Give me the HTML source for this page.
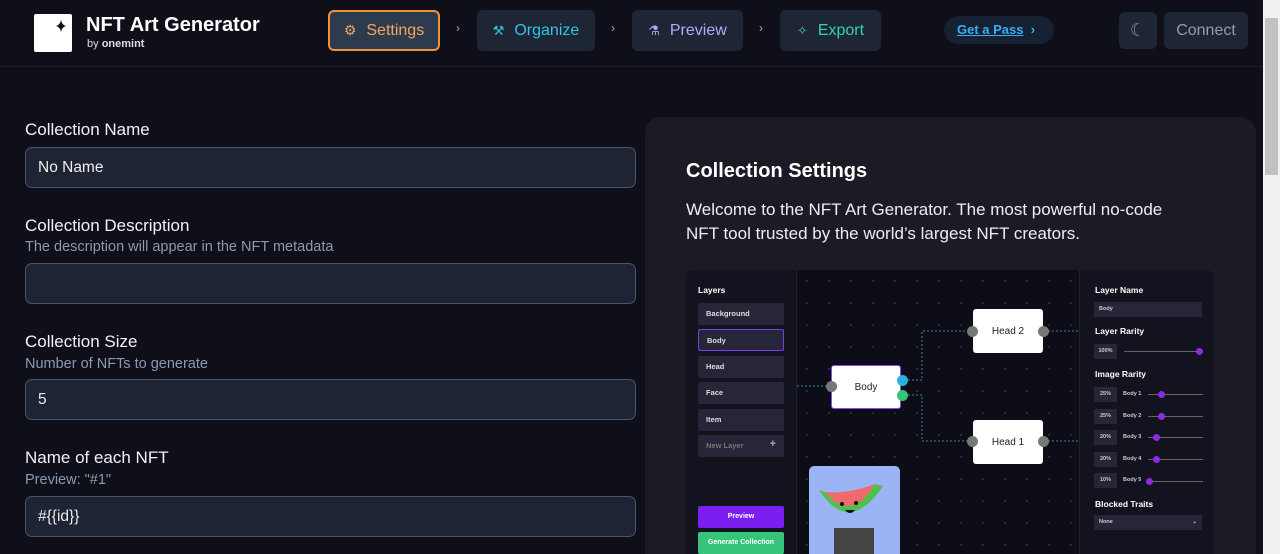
<!DOCTYPE html>
<html style="width:1280px;height:554px;overflow:hidden"><head><meta charset="utf-8"><style>
*{box-sizing:border-box;margin:0;padding:0}
body{width:1280px;height:554px;overflow:hidden;background:#0f0f1a;font-family:"Liberation Sans",sans-serif;color:#fff;position:relative}
.hdr{position:absolute;left:0;top:0;width:1263px;height:67px;border-bottom:1px solid #1c1f2e}
.logo{position:absolute;left:34px;top:14px;width:38px;height:38px;background:#fff;border-radius:2px}
.btn{position:absolute;top:10px;height:41px;border-radius:6px;background:#1e2636;font-size:16px;display:flex;align-items:center;justify-content:center;gap:10px}
.chev{position:absolute;top:21px;color:#aab;font-size:12px}
.lbl{position:absolute;left:25px;font-size:17px;color:#f2f2f2}
.sub{position:absolute;left:25px;font-size:14.5px;color:#8a9ab0}
.inp{position:absolute;left:25px;width:611px;height:41px;border:1px solid #4a5568;background:#1e2433;border-radius:7px;font-size:15.5px;padding:11px 12px;color:#eee}
.panel{position:absolute;left:645px;top:117px;width:611px;height:437px;background:#1b1b25;border-radius:16px 16px 0 0}
.img{position:absolute;left:686px;top:270px;width:528px;height:284px;background:#0d0d17;border-radius:8px 8px 0 0;overflow:hidden;font-weight:bold;background-image:radial-gradient(#2a2a3a 1px,transparent 1.3px);background-size:22px 22px}
.li{position:absolute;left:12px;width:86px;height:22px;background:#262638;border-radius:2px;font-size:7.5px;padding:6px 8px;color:#ddd}
.node{position:absolute;width:70px;height:44px;background:#fff;border-radius:3px;color:#222;font-size:10px;font-weight:normal;display:flex;align-items:center;justify-content:center}
.dot{position:absolute;width:11px;height:11px;border-radius:50%;background:#777}
.pc{position:absolute;left:408px;width:23px;height:15px;background:#262638;font-size:5.5px;color:#ccc;text-align:center;line-height:15px}
.bn{position:absolute;left:437px;font-size:5.5px;color:#ccc}
.sl{position:absolute;left:462px;width:55px;height:1px;background:#666}
.sk{position:absolute;width:7px;height:7px;border-radius:50%;background:#8a2be2}
</style></head><body>
<div class="hdr">
<div class="logo"><svg width="38" height="38"><path d="M27 6 Q28 11 32 12 Q28 13 27 18 Q26 13 22 12 Q26 11 27 6Z" fill="#111"/></svg></div>
<div style="position:absolute;left:86px;top:14px;font-size:20px;font-weight:bold">NFT Art Generator</div>
<div style="position:absolute;left:87px;top:38px;font-size:11px;color:#ddd">by <b>onemint</b></div>
<div class="btn" style="left:328px;width:112px;border:2px solid #f0913a;background:#2e3a4e;color:#f5a65b"><span style="font-size:14px">⚙</span>Settings</div>
<div class="chev" style="left:456px">›</div>
<div class="btn" style="left:477px;width:118px;color:#2ec4e6"><span style="font-size:13px">⚒</span>Organize</div>
<div class="chev" style="left:611px">›</div>
<div class="btn" style="left:632px;width:111px;color:#b6a8f5"><span style="font-size:13px">⚗</span>Preview</div>
<div class="chev" style="left:759px">›</div>
<div class="btn" style="left:780px;width:101px;color:#35d4a4"><span style="font-size:13px">✧</span>Export</div>
<div style="position:absolute;left:944px;top:16px;width:110px;height:28px;border-radius:14px;background:#162233;color:#38aef0;font-size:13px;font-weight:bold;padding:6px 13px"><u>Get a Pass</u>&nbsp;&nbsp;›</div>
<div class="btn" style="left:1119px;top:12px;width:38px;height:37px;color:#889;font-size:18px">☾</div>
<div class="btn" style="left:1164px;top:12px;width:84px;height:37px;color:#99a;font-size:16px">Connect</div>
</div>
<div style="position:absolute;left:1263px;top:0;width:17px;height:554px;background:#f1f1f1"><div style="position:absolute;left:2px;top:18px;width:13px;height:157px;background:#c1c1c1"></div></div>

<div class="lbl" style="top:120px">Collection Name</div>
<div class="inp" style="top:147px">No Name</div>
<div class="lbl" style="top:216px">Collection Description</div>
<div class="sub" style="top:239px">The description will appear in the NFT metadata</div>
<div class="inp" style="top:263px"></div>
<div class="lbl" style="top:332px">Collection Size</div>
<div class="sub" style="top:356px">Number of NFTs to generate</div>
<div class="inp" style="top:379px">5</div>
<div class="lbl" style="top:448px">Name of each NFT</div>
<div class="sub" style="top:472px">Preview: "#1"</div>
<div class="inp" style="top:496px">#{{id}}</div>

<div class="panel"></div>
<div style="position:absolute;left:686px;top:160px;font-size:20px;font-weight:bold">Collection Settings</div>
<div style="position:absolute;left:686px;top:198px;width:505px;font-size:17px;line-height:24px;color:#eee">Welcome to the NFT Art Generator. The most powerful no-code NFT tool trusted by the world’s largest NFT creators.</div>

<div class="img">
<div style="position:absolute;left:0;top:0;width:111px;height:290px;background:#13131f;border-right:1px solid #222"></div>
<div style="position:absolute;left:393px;top:0;width:135px;height:290px;background:#13131f;border-left:1px solid #222"></div>
<div style="position:absolute;left:12px;top:15px;font-size:8.5px">Layers</div>
<div class="li" style="top:33px">Background</div>
<div class="li" style="top:59px;border:1px solid #7b3ff0">Body</div>
<div class="li" style="top:86px">Head</div>
<div class="li" style="top:112px">Face</div>
<div class="li" style="top:139px">Item</div>
<div class="li" style="top:165px;color:#777">New Layer<span style="float:right;color:#aaa;font-size:11px;margin-top:-3px">+</span></div>
<div style="position:absolute;left:12px;top:236px;width:86px;height:22px;background:#7b1ff0;border-radius:2px;font-size:7px;text-align:center;line-height:22px">Preview</div>
<div style="position:absolute;left:12px;top:262px;width:86px;height:22px;background:#35c47a;border-radius:2px;font-size:7px;text-align:center;line-height:22px">Generate Collection</div>
<svg style="position:absolute;left:0;top:0" width="528" height="290"><g fill="none" stroke-dasharray="2 2" stroke-width="1"><path d="M111 116H143M218 110H236V61H285M358 61H393M218 125H236V171H285M358 171H393" stroke="#3a8a9a"/></g></svg>
<div class="node" style="left:145px;top:95px;border:1px solid #8a4af0">Body</div>
<div class="dot" style="left:140px;top:111px"></div>
<div class="dot" style="left:211px;top:105px;background:#2ab0e0"></div>
<div class="dot" style="left:211px;top:120px;background:#35c47a"></div>
<div class="node" style="left:287px;top:39px">Head 2</div>
<div class="dot" style="left:281px;top:56px"></div><div class="dot" style="left:352px;top:56px"></div>
<div class="node" style="left:287px;top:150px">Head 1</div>
<div class="dot" style="left:281px;top:166px"></div><div class="dot" style="left:352px;top:166px"></div>
<div style="position:absolute;left:123px;top:196px;width:91px;height:100px;background:#9ab4f5;border-radius:5px;overflow:hidden"><svg width="91" height="100"><path d="M25 62h40v40H25z" fill="#444"/><path d="M10 24 Q40 70 74 20 L66 18 Q42 58 16 26Z" fill="#4fc04a"/><path d="M16 26 Q42 58 66 18 Q40 28 16 26Z" fill="#ef6a6a"/><circle cx="33" cy="38" r="2" fill="#111"/><circle cx="47" cy="37" r="2" fill="#111"/><path d="M36 44 q5 6 10 0z" fill="#111"/></svg></div>
<div style="position:absolute;left:409px;top:15px;font-size:8.5px">Layer Name</div>
<div style="position:absolute;left:408px;top:32px;width:108px;height:15px;background:#262638;font-size:5.5px;color:#ccc;padding:4px 5px">Body</div>
<div style="position:absolute;left:409px;top:56px;font-size:8.5px">Layer Rarity</div>
<div class="pc" style="top:74px">100%</div><div class="sl" style="left:438px;width:76px;top:81px"></div><div class="sk" style="left:510px;top:78px"></div>
<div style="position:absolute;left:409px;top:99px;font-size:8.5px">Image Rarity</div>
<div class="pc" style="top:117px">25%</div><div class="bn" style="top:121px">Body 1</div><div class="sl" style="top:124px"></div><div class="sk" style="left:472px;top:121px"></div>
<div class="pc" style="top:139px">25%</div><div class="bn" style="top:143px">Body 2</div><div class="sl" style="top:146px"></div><div class="sk" style="left:472px;top:143px"></div>
<div class="pc" style="top:160px">20%</div><div class="bn" style="top:164px">Body 3</div><div class="sl" style="top:167px"></div><div class="sk" style="left:467px;top:164px"></div>
<div class="pc" style="top:182px">20%</div><div class="bn" style="top:186px">Body 4</div><div class="sl" style="top:189px"></div><div class="sk" style="left:467px;top:186px"></div>
<div class="pc" style="top:203px">10%</div><div class="bn" style="top:207px">Body 5</div><div class="sl" style="top:211px"></div><div class="sk" style="left:460px;top:208px"></div>
<div style="position:absolute;left:409px;top:229px;font-size:8.5px">Blocked Traits</div>
<div style="position:absolute;left:408px;top:245px;width:108px;height:15px;background:#262638;font-size:5.5px;color:#ccc;padding:4px 5px">None<span style="float:right">⌄</span></div>
</div>
</body></html>
